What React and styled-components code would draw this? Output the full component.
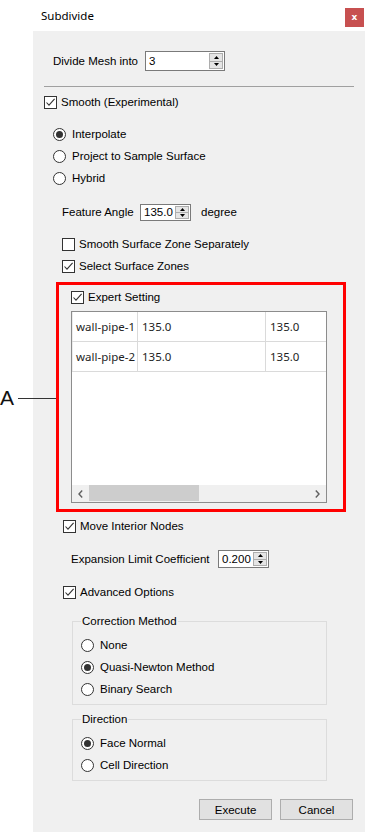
import React from "react";
import styled, { createGlobalStyle } from "styled-components";

const GlobalStyle = createGlobalStyle`
  html, body { margin: 0; padding: 0; background: #ffffff; }
  body { font-family: "Liberation Sans", Arial, sans-serif; }
  * { box-sizing: border-box; }
`;

const Page = styled.div`
  position: relative;
  width: 365px;
  height: 832px;
  display: flex;
  background: #ffffff;
  color: #000;
  font-size: 11.5px;
  overflow: hidden;
`;

const Gutter = styled.div`
  width: 33px;
  flex: none;
`;

const Window = styled.div`
  flex: 1;
  display: flex;
  flex-direction: column;
`;

const TitleBar = styled.div`
  height: 31px;
  flex: none;
  display: flex;
  justify-content: space-between;
  align-items: flex-start;
  padding: 0 1px 0 8px;
  background: #ffffff;
`;

const Title = styled.span`
  font-family: "Noto Sans", "Liberation Sans", sans-serif;
  font-size: 11.5px;
  line-height: 14px;
  margin-top: 9px;
  color: #000;
`;

const CloseButton = styled.div`
  width: 19px;
  height: 19px;
  margin-top: 8px;
  background: #c75050;
  color: #fff;
  display: flex;
  align-items: center;
  justify-content: center;
  font-family: "DejaVu Sans", sans-serif;
  font-weight: bold;
  font-size: 9px;
  line-height: 1;
  padding-bottom: 1px;
`;

const Body = styled.div`
  flex: 1;
  background: #f0f0f0;
  display: flex;
  flex-direction: column;
  padding-top: 20px;
`;

const Row = styled.div`
  display: flex;
  align-items: center;
  height: ${(p) => p.$h || 22}px;
  margin-top: ${(p) => p.$mt || 0}px;
  padding-left: ${(p) => p.$pl || 0}px;
  flex: none;
`;

const Label = styled.span`
  line-height: 14px;
  white-space: nowrap;
  width: ${(p) => (p.$w ? `${p.$w}px` : "auto")};
  flex: none;
`;

const Suffix = styled.span`
  line-height: 14px;
  margin-left: 10px;
`;

const Separator = styled.div`
  height: 1px;
  margin: 15px 11px 0 11px;
  background: #a0a0a0;
  flex: none;
`;

/* ---------- checkbox / radio ---------- */

const CheckWrap = styled.label`
  display: flex;
  align-items: center;
  gap: 4px;
  line-height: 14px;
  white-space: nowrap;
`;

const Box = styled.span`
  width: 13px;
  height: 13px;
  flex: none;
  border: 1px solid #333;
  background: #fff;
  display: flex;
  align-items: center;
  justify-content: center;
`;

const Check = ({ checked, children }) => (
  <CheckWrap>
    <Box>
      {checked && (
        <svg width="11" height="11" viewBox="0 0 11 11">
          <polyline
            points="1.5,5.5 4,8.2 9.6,1.8"
            fill="none"
            stroke="#333"
            strokeWidth="1.1"
          />
        </svg>
      )}
    </Box>
    {children}
  </CheckWrap>
);

const RadioWrap = styled.label`
  display: flex;
  align-items: center;
  gap: 6px;
  line-height: 14px;
  white-space: nowrap;
`;

const Circle = styled.span`
  width: 13px;
  height: 13px;
  flex: none;
  border: 1px solid #333;
  border-radius: 50%;
  background: #fff;
  display: flex;
  align-items: center;
  justify-content: center;
`;

const Dot = styled.span`
  width: 7px;
  height: 7px;
  border-radius: 50%;
  background: #333;
`;

const Radio = ({ checked, children }) => (
  <RadioWrap>
    <Circle>{checked && <Dot />}</Circle>
    {children}
  </RadioWrap>
);

/* ---------- spin box ---------- */

const SpinBox = styled.div`
  width: ${(p) => p.$w}px;
  height: ${(p) => p.$h}px;
  flex: none;
  border: 1px solid #7a7a7a;
  background: #fff;
  display: flex;
  align-items: stretch;
  padding: 1px 1px 1px 3px;
`;

const SpinValue = styled.span`
  flex: 1;
  display: flex;
  align-items: center;
  line-height: 14px;
`;

const SpinButtons = styled.div`
  width: 14px;
  flex: none;
  display: flex;
  flex-direction: column;
  border: 1px solid #adadad;
  background: #e5e5e5;
`;

const SpinHalf = styled.div`
  flex: 1;
  display: flex;
  align-items: center;
  justify-content: center;
  & + & {
    border-top: 1px solid #adadad;
  }
`;

const Spin = ({ w, h, value }) => (
  <SpinBox $w={w} $h={h}>
    <SpinValue>{value}</SpinValue>
    <SpinButtons>
      <SpinHalf>
        <svg width="5" height="3" viewBox="0 0 5 3">
          <polygon points="2.5,0 5,3 0,3" fill="#000" />
        </svg>
      </SpinHalf>
      <SpinHalf>
        <svg width="5" height="3" viewBox="0 0 5 3">
          <polygon points="0,0 5,0 2.5,3" fill="#000" />
        </svg>
      </SpinHalf>
    </SpinButtons>
  </SpinBox>
);

/* ---------- highlighted expert area ---------- */

const Highlight = styled.div`
  width: 290px;
  height: 230px;
  margin: 5px 0 0 23px;
  border: 3px solid #ff0000;
  padding: 1px 0 6px 12px;
  display: flex;
  flex-direction: column;
  flex: none;
`;

const Table = styled.div`
  width: 256px;
  height: 192px;
  margin-top: 3px;
  border: 1px solid #8c8c8c;
  background: #fff;
  display: flex;
  flex-direction: column;
  overflow: hidden;
  font-family: "Noto Sans", "Liberation Sans", sans-serif;
  font-size: 11.5px;
  color: #1e1e1e;
`;

const TableRow = styled.div`
  display: grid;
  grid-template-columns: 66px 128px 80px;
  height: 30px;
  border-bottom: 1px solid #dadada;
  flex: none;
`;

const Cell = styled.div`
  display: flex;
  align-items: center;
  padding-left: ${(p) => p.$pl}px;
  border-right: 1px solid #dadada;
  white-space: nowrap;
  border-left: ${(p) => (p.$header ? "1px solid #ececec" : "none")};
`;

const Filler = styled.div`
  flex: 1;
`;

const HScroll = styled.div`
  height: 17px;
  flex: none;
  display: flex;
  background: #f0f0f0;
`;

const ScrollArrow = styled.div`
  width: 17px;
  flex: none;
  display: flex;
  align-items: center;
  justify-content: center;
`;

const Track = styled.div`
  flex: 1;
  display: flex;
  padding: 0 0 1px 0;
`;

const Thumb = styled.div`
  width: 110px;
  background: #cdcdcd;
`;

/* ---------- group box ---------- */

const Group = styled.fieldset`
  width: 255px;
  margin: ${(p) => p.$mt}px 0 0 39px;
  padding: 6px 8px 4px 8px;
  border: 1px solid #dcdcdc;
  min-width: 0;
  flex: none;
`;

const Legend = styled.legend`
  padding: 0 1px;
  line-height: 14px;
  font-size: 11.5px;
`;

const GroupRow = styled.div`
  height: 22px;
  display: flex;
  align-items: center;
`;

/* ---------- buttons ---------- */

const ButtonBar = styled.div`
  display: flex;
  justify-content: flex-end;
  gap: 8px;
  margin-top: 18px;
  padding-right: 12px;
  flex: none;
`;

const Button = styled.button`
  width: 73px;
  height: 21px;
  border: 1px solid #adadad;
  background: #e1e1e1;
  font-family: "Liberation Sans", Arial, sans-serif;
  font-size: 11.5px;
  color: #000;
  padding: 0;
  line-height: 14px;
`;

/* ---------- annotation ---------- */

const Annotation = styled.div`
  position: absolute;
  left: 0;
  top: 388px;
  height: 20px;
  display: flex;
  align-items: center;
`;

const AnnotationLetter = styled.span`
  font-family: "Liberation Sans", Arial, sans-serif;
  font-size: 21px;
  line-height: 20px;
  color: #111;
  margin-left: 0px;
`;

const Leader = styled.div`
  width: 38px;
  height: 1px;
  margin-left: 4px;
  background: #333;
`;

const rows = [
  { name: "wall-pipe-1", a: "135.0", b: "135.0" },
  { name: "wall-pipe-2", a: "135.0", b: "135.0" },
];

export default function App() {
  return (
    <>
      <GlobalStyle />
      <Page>
        <Gutter />
        <Window>
          <TitleBar>
            <Title>Subdivide</Title>
            <CloseButton>x</CloseButton>
          </TitleBar>
          <Body>
            <Row $h={20} $pl={20}>
              <Label $w={92}>Divide Mesh into</Label>
              <Spin w={80} h={20} value="3" />
            </Row>
            <Separator />
            <Row $mt={4} $pl={11}>
              <Check checked>Smooth (Experimental)</Check>
            </Row>
            <Row $mt={10} $pl={20}>
              <Radio checked>Interpolate</Radio>
            </Row>
            <Row $pl={20}>
              <Radio>Project to Sample Surface</Radio>
            </Row>
            <Row $pl={20}>
              <Radio>Hybrid</Radio>
            </Row>
            <Row $mt={12} $pl={29}>
              <Label $w={78}>Feature Angle</Label>
              <Spin w={51} h={17} value="135.0" />
              <Suffix>degree</Suffix>
            </Row>
            <Row $mt={10} $pl={29}>
              <Check>Smooth Surface Zone Separately</Check>
            </Row>
            <Row $pl={29}>
              <Check checked>Select Surface Zones</Check>
            </Row>

            <Highlight>
              <Row>
                <Check checked>Expert Setting</Check>
              </Row>
              <Table>
                {rows.map((r) => (
                  <TableRow key={r.name}>
                    <Cell $pl={3} $header>
                      {r.name}
                    </Cell>
                    <Cell $pl={4}>{r.a}</Cell>
                    <Cell $pl={4}>{r.b}</Cell>
                  </TableRow>
                ))}
                <Filler />
                <HScroll>
                  <ScrollArrow>
                    <svg width="5" height="8" viewBox="0 0 5 8">
                      <polyline points="4.2,0.5 1,4 4.2,7.5" fill="none" stroke="#606060" strokeWidth="1.4" />
                    </svg>
                  </ScrollArrow>
                  <Track>
                    <Thumb />
                  </Track>
                  <ScrollArrow>
                    <svg width="5" height="8" viewBox="0 0 5 8">
                      <polyline points="0.8,0.5 4,4 0.8,7.5" fill="none" stroke="#606060" strokeWidth="1.4" />
                    </svg>
                  </ScrollArrow>
                </HScroll>
              </Table>
            </Highlight>

            <Row $mt={3} $pl={30}>
              <Check checked>Move Interior Nodes</Check>
            </Row>
            <Row $mt={11} $pl={38}>
              <Label $w={147}>Expansion Limit Coefficient</Label>
              <Spin w={51} h={18} value="0.200" />
            </Row>
            <Row $mt={11} $pl={30}>
              <Check checked>Advanced Options</Check>
            </Row>

            <Group $mt={11}>
              <Legend>Correction Method</Legend>
              <GroupRow>
                <Radio>None</Radio>
              </GroupRow>
              <GroupRow>
                <Radio checked>Quasi-Newton Method</Radio>
              </GroupRow>
              <GroupRow>
                <Radio>Binary Search</Radio>
              </GroupRow>
            </Group>

            <Group $mt={7}>
              <Legend>Direction</Legend>
              <GroupRow>
                <Radio checked>Face Normal</Radio>
              </GroupRow>
              <GroupRow>
                <Radio>Cell Direction</Radio>
              </GroupRow>
            </Group>

            <ButtonBar>
              <Button>Execute</Button>
              <Button>Cancel</Button>
            </ButtonBar>
          </Body>
        </Window>
        <Annotation>
          <AnnotationLetter>A</AnnotationLetter>
          <Leader />
        </Annotation>
      </Page>
    </>
  );
}
